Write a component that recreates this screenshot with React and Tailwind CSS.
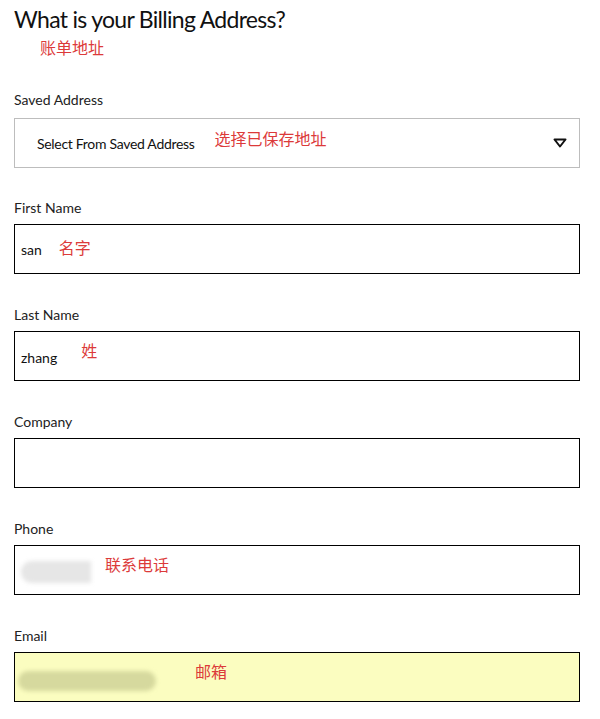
const sans = "font-['Lato','Noto_Sans_CJK_SC',sans-serif]";
const cjk = "font-['Noto_Sans_CJK_SC',sans-serif]";

const Note = ({ children, className = '' }) => (
  <span className={`${cjk} text-[16px] leading-5 text-[#dc3a3a] ${className}`}>{children}</span>
);

const Field = ({ label, children, className = 'bg-white', gap = 'mt-[31px]' }) => (
  <div className={gap}>
    <div className="text-[14px] leading-5 text-[#222]">{label}</div>
    <div className={`mt-[6px] h-[50px] border border-black flex items-center ${className}`}>{children}</div>
  </div>
);

export default function App() {
  return (
    <div className={`${sans} bg-white w-[600px] min-h-[719px] pl-[14px] pr-[20px] pt-[5px] text-[#111]`}>
      <h1 className="text-[23px] leading-7 font-normal tracking-[-0.7px]">What is your Billing Address?</h1>
      <div className="pl-[26px] mt-[3px]">
        <Note>账单地址</Note>
      </div>

      <div className="mt-[30px]">
        <div className="text-[14px] leading-5 text-[#222]">Saved Address</div>
        <div className="mt-[8px] h-[50px] border border-[#bdbdbd] flex items-center pl-[22px] pr-[12px]">
          <span className="text-[14px] tracking-[-0.3px] text-[#111] pt-[1px]">Select From Saved Address</span>
          <Note className="ml-[20px] -mt-[10px]">选择已保存地址</Note>
          <svg className="ml-auto" width="14" height="10" viewBox="0 0 14 10">
            <path d="M1.5 1.5h11L7 8.5z" fill="none" stroke="#111" strokeWidth="2" strokeLinejoin="round" />
          </svg>
        </div>
      </div>

      <Field label="First Name" gap="mt-[30px]">
        <span className="ml-[6px] text-[14px]">san</span>
        <Note className="ml-[17px] -mt-[4px]">名字</Note>
      </Field>

      <Field label="Last Name">
        <span className="ml-[6px] text-[14px] pt-[2px]">zhang</span>
        <Note className="ml-[24px] -mt-[12px]">姓</Note>
      </Field>

      <Field label="Company" />

      <Field label="Phone">
        <div className="ml-[6px] mt-[4px] w-[70px] h-[22px] rounded-l-full bg-[#e6e6e6] blur-[2px]" />
        <Note className="ml-[14px] -mt-[13px]">联系电话</Note>
      </Field>

      <Field label="Email" className="bg-[#fbfdc0]">
        <div className="ml-[3px] mt-[8px] w-[138px] h-[20px] rounded-full bg-[#d6d99e] blur-[2px]" />
        <Note className="ml-[39px] -mt-[12px]">邮箱</Note>
      </Field>
    </div>
  );
}
